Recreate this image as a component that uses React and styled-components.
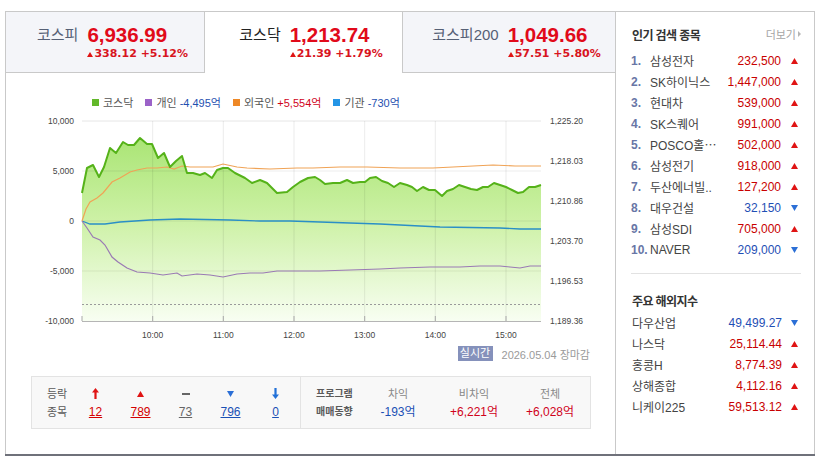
import React from 'react';
import styled, { createGlobalStyle } from 'styled-components';

const GlobalStyle = createGlobalStyle`
  html, body {
    margin: 0;
    padding: 0;
    background: #fff;
  }
  body {
    font-family: "Liberation Sans", "Noto Sans CJK KR", sans-serif;
    color: #333;
  }
`;

const Frame = styled.div`
  display: flex;
  width: 810px;
  height: 443px;
  margin: 11px 0 0 5px;
  border-bottom: 2px solid #6f717a;
`;

const Main = styled.div`
  width: 609px;
  border-left: 1px solid #c9c9c9;
  display: flex;
  flex-direction: column;
`;

const TabRow = styled.div`
  display: flex;
  height: 62px;
`;

const Tab = styled.div`
  box-sizing: border-box;
  width: ${p => p.$w}px;
  height: 62px;
  display: flex;
  align-items: flex-start;
  justify-content: center;
  gap: 9px;
  padding: 12px 0 0 15px;
  border-top: 1px solid #c9c9c9;
  border-bottom: 1px solid ${p => (p.$active ? '#fff' : '#c9c9c9')};
  border-left: ${p => (p.$lineLeft ? '1px solid #c9c9c9' : 'none')};
  border-right: ${p => (p.$lineRight ? '1px solid #c9c9c9' : 'none')};
  background: ${p => (p.$active ? '#fff' : '#f4f5f9')};
`;

const TabLabel = styled.div`
  font-size: 15px;
  line-height: 22px;
  color: ${p => (p.$active ? '#222' : '#566075')};
`;

const TabValues = styled.div`
  display: flex;
  flex-direction: column;
`;

const TabNumber = styled.div`
  font-size: 20.5px;
  line-height: 22px;
  font-weight: 700;
  color: #e10a1a;
`;

const TabChange = styled.div`
  display: flex;
  align-items: center;
  margin-top: 1px;
  font-family: "DejaVu Sans", sans-serif;
  font-size: 11px;
  line-height: 14px;
  font-weight: 700;
  color: #d8141e;
  svg {
    margin-right: 1px;
  }
`;

const Legend = styled.div`
  display: flex;
  align-items: center;
  height: 16px;
  margin: 21px 0 0 86px;
  font-size: 11px;
  color: #555;
`;

const LegendItem = styled.div`
  display: flex;
  align-items: center;
  margin-right: 12px;
`;

const Swatch = styled.span`
  width: 7px;
  height: 7px;
  margin-right: 4px;
  background: ${p => p.$c};
`;

const LegendValue = styled.span`
  margin-left: 3px;
  color: ${p => (p.$up ? '#d0021b' : '#1e4fb0')};
`;

const ChartSvg = styled.svg`
  display: block;
`;

const RealtimeRow = styled.div`
  display: flex;
  justify-content: flex-end;
  align-items: center;
  height: 15px;
  margin-top: 4px;
  padding-right: 25px;
`;

const Badge = styled.span`
  width: 35px;
  height: 15px;
  line-height: 15px;
  text-align: center;
  font-size: 11px;
  color: #fff;
  background: #8591bb;
`;

const DateText = styled.span`
  margin-left: 9px;
  font-size: 11px;
  color: #9a9a9a;
`;

const StatsBox = styled.div`
  display: flex;
  box-sizing: border-box;
  height: 53px;
  margin: 15px 24px 0 25px;
  border: 1px solid #e3e3e3;
  background: #f8f8f8;
`;

const StatsGroup = styled.div`
  box-sizing: border-box;
  display: flex;
  align-items: center;
  width: ${p => p.$w}px;
  padding-left: 14px;
  border-right: ${p => (p.$line ? '1px solid #e3e3e3' : 'none')};
`;

const StatLabel = styled.div`
  width: ${p => p.$w}px;
  font-size: ${p => (p.$bold ? 10 : 11)}px;
  font-weight: ${p => (p.$bold ? 700 : 400)};
  line-height: 18px;
  color: #5a5a5a;
  padding-left: 1px;
`;

const StatCol = styled.div`
  width: ${p => p.$w}px;
  display: flex;
  flex-direction: column;
  align-items: center;
  line-height: 18px;
  font-size: 12px;
`;

const IconCell = styled.div`
  height: 18px;
  display: flex;
  align-items: center;
`;

const CountLink = styled.span`
  color: ${p => p.$c};
  text-decoration: underline;
`;

const ProgHead = styled.span`
  font-size: 11px;
  color: #888;
`;

const ProgValue = styled.span`
  color: ${p => (p.$up ? '#d0021b' : '#1a50b5')};
`;

const Side = styled.div`
  box-sizing: border-box;
  width: 200px;
  border: 1px solid #c9c9c9;
  border-bottom: none;
  padding: 14px 13px 0 15px;
`;

const SideHead = styled.div`
  display: flex;
  justify-content: space-between;
  align-items: center;
  height: 16px;
  margin-top: ${p => p.$mt || 0}px;
`;

const SideTitle = styled.span`
  font-size: 12px;
  font-weight: 700;
  letter-spacing: -0.6px;
  color: #333;
  padding-left: 1px;
`;

const More = styled.span`
  display: flex;
  align-items: center;
  gap: 2px;
  font-size: 11px;
  color: #a5a5a5;
`;

const List = styled.div`
  margin-top: ${p => p.$mt}px;
`;

const Row = styled.div`
  display: flex;
  align-items: center;
  height: 21px;
  font-size: 12px;
`;

const Rank = styled.span`
  width: 19px;
  flex: none;
  font-weight: 700;
  color: #6876a6;
  font-size: 12px;
`;

const Name = styled.span`
  flex: 1;
  color: #444;
  white-space: nowrap;
  overflow: hidden;
  padding-left: ${p => p.$pl || 0}px;
`;

const Value = styled.span`
  color: ${p => (p.$up ? '#c80000' : '#1f4fb5')};
`;

const ArrowBox = styled.span`
  width: 13px;
  margin-left: ${p => p.$ml || 7}px;
  display: flex;
  justify-content: center;
`;

const Divider = styled.div`
  height: 1px;
  background: #e2e2e2;
  margin-top: 13px;
`;

const Tri = ({ up, color, w = 7, h = 6 }) => (
  <svg width={w} height={h} viewBox={`0 0 ${w} ${h}`}>
    <polygon
      points={up ? `${w / 2},0 ${w},${h} 0,${h}` : `0,0 ${w},0 ${w / 2},${h}`}
      fill={color || (up ? '#e01414' : '#2b6fd6')}
    />
  </svg>
);

const BigArrow = ({ up }) => (
  <svg width="7" height="11" viewBox="0 0 7 11">
    <polygon
      points={
        up
          ? '3.5,0 7,4.6 4.6,4.6 4.6,11 2.4,11 2.4,4.6 0,4.6'
          : '3.5,11 7,6.4 4.6,6.4 4.6,0 2.4,0 2.4,6.4 0,6.4'
      }
      fill={up ? '#e01414' : '#2271d8'}
    />
  </svg>
);

const tabs = [
  { label: '코스피', num: '6,936.99', chg: '338.12 +5.12%', w: 199, lineRight: true },
  { label: '코스닥', num: '1,213.74', chg: '21.39 +1.79%', w: 197, active: true },
  { label: '코스피200', num: '1,049.66', chg: '57.51 +5.80%', w: 213, lineLeft: true },
];

const popular = [
  ['1.', '삼성전자', '232,500', true],
  ['2.', 'SK하이닉스', '1,447,000', true],
  ['3.', '현대차', '539,000', true],
  ['4.', 'SK스퀘어', '991,000', true],
  ['5.', 'POSCO홀⋯', '502,000', true],
  ['6.', '삼성전기', '918,000', true],
  ['7.', '두산에너빌..', '127,200', true],
  ['8.', '대우건설', '32,150', false],
  ['9.', '삼성SDI', '705,000', true],
  ['10.', 'NAVER', '209,000', false],
];

const overseas = [
  ['다우산업', '49,499.27', false],
  ['나스닥', '25,114.44', true],
  ['홍콩H', '8,774.39', true],
  ['상해종합', '4,112.16', true],
  ['니케이225', '59,513.12', true],
];

const kosdaq = [
  [82, 193], [87, 168], [93, 165], [99, 177], [104, 167], [110, 148], [116, 153], [123, 142],
  [128, 145], [134, 145], [140, 138], [147, 144], [152, 144], [158, 158], [164, 153], [170, 167],
  [176, 161], [182, 156], [187, 173], [193, 173], [200, 175], [205, 173], [212, 178], [217, 170],
  [223, 168], [228, 168], [235, 173], [245, 178], [252, 183], [260, 180], [267, 183], [277, 193],
  [287, 192], [293, 187], [300, 182], [308, 178], [315, 177], [320, 180], [325, 184], [333, 183],
  [340, 183], [347, 180], [353, 183], [360, 182], [365, 182], [370, 178], [376, 177], [382, 181],
  [388, 183], [394, 187], [400, 183], [407, 185], [412, 187], [417, 191], [423, 187], [429, 190],
  [435, 190], [442, 196], [447, 191], [453, 189], [459, 185], [465, 187], [471, 189], [477, 190],
  [483, 187], [488, 187], [494, 183], [500, 185], [506, 187], [512, 190], [518, 193], [523, 192],
  [529, 187], [535, 187], [541, 185],
];

const foreign = [
  [82, 221], [86, 209], [90, 202], [97, 198], [103, 193], [112, 182], [120, 178], [130, 172],
  [137, 170], [147, 168], [157, 168], [167, 167], [174, 169], [182, 166], [190, 167], [213, 167],
  [223, 164], [237, 167], [247, 168], [270, 169], [297, 168], [313, 168], [340, 167], [367, 167],
  [400, 168], [433, 168], [453, 167], [493, 165], [515, 166], [541, 166],
];

const retail = [
  [82, 221], [87, 228], [93, 237], [100, 240], [105, 245], [112, 257], [118, 262], [127, 268],
  [137, 272], [150, 273], [163, 275], [177, 273], [182, 276], [197, 274], [210, 275], [223, 277],
  [237, 274], [250, 273], [263, 273], [277, 271], [297, 271], [320, 271], [350, 270], [380, 269],
  [400, 268], [430, 267], [460, 267], [480, 266], [500, 266], [510, 267], [520, 268], [530, 266],
  [541, 266],
];

const inst = [
  [82, 221], [90, 224], [105, 224], [120, 222], [150, 220], [180, 219], [230, 220], [260, 221],
  [290, 221], [320, 222], [380, 224], [440, 227], [500, 228], [520, 229], [541, 229],
];

const toPath = pts => pts.map((p, i) => `${i ? 'L' : 'M'}${p[0]} ${p[1]}`).join(' ');

const times = [
  [152.7, '10:00'], [223.3, '11:00'], [294, '12:00'], [364.7, '13:00'], [435.3, '14:00'], [506, '15:00'],
];
const leftAxis = [[121, '10,000'], [171, '5,000'], [221, '0'], [271, '-5,000'], [321, '-10,000']];
const rightAxis = [
  [121, '1,225.20'], [161, '1,218.03'], [201, '1,210.86'], [241, '1,203.70'], [281, '1,196.53'], [321, '1,189.36'],
];

const Chart = () => (
  <ChartSvg width="609" height="232" viewBox="6 110 609 232">
    <defs>
      <linearGradient id="kqFill" x1="0" y1="0" x2="0" y2="1">
        <stop offset="0" stopColor="#aae575" />
        <stop offset="0.45" stopColor="#cdf1a6" />
        <stop offset="1" stopColor="#f8fef2" />
      </linearGradient>
    </defs>
    <line x1="82" y1="121" x2="541" y2="121" stroke="#e6e6e6" />
    <path d={`${toPath(kosdaq)} L541 321 L82 321 Z`} fill="url(#kqFill)" />
    {[171, 221, 271].map(y => (
      <line key={y} x1="82" y1={y} x2="541" y2={y} stroke="#000" strokeOpacity="0.07" />
    ))}
    {times.map(([x]) => (
      <line key={x} x1={x} y1="121" x2={x} y2="321" stroke="#000" strokeOpacity="0.08" />
    ))}
    <line x1="82" y1="304.5" x2="541" y2="304.5" stroke="#9a9a9a" strokeDasharray="2 2" />
    <line x1="82" y1="321.5" x2="541" y2="321.5" stroke="#b5b5b5" />
    {[[82], ...times].map(([x]) => (
      <line key={`t${x}`} x1={x} y1="316" x2={x} y2="321" stroke="#a8a8a8" />
    ))}
    <path d={toPath(inst)} fill="none" stroke="#2a8fc6" strokeWidth="1.3" />
    <path d={toPath(retail)} fill="none" stroke="#9a7ab4" strokeWidth="1.2" />
    <path d={toPath(foreign)} fill="none" stroke="#f0a356" strokeWidth="1.2" />
    <path d={toPath(kosdaq)} fill="none" stroke="#55b219" strokeWidth="2" strokeLinejoin="round" />
    <g fontFamily="Liberation Sans, sans-serif" fontSize="8.5" fill="#444">
      {leftAxis.map(([y, t]) => (
        <text key={t} x="74" y={y + 3} textAnchor="end">{t}</text>
      ))}
      {rightAxis.map(([y, t]) => (
        <text key={t} x="550" y={y + 3}>{t}</text>
      ))}
      {times.map(([x, t]) => (
        <text key={t} x={x} y="338" textAnchor="middle">{t}</text>
      ))}
    </g>
  </ChartSvg>
);

const App = () => (
  <>
    <GlobalStyle />
    <Frame>
      <Main>
        <TabRow>
          {tabs.map(t => (
            <Tab key={t.label} $w={t.w} $active={t.active} $lineLeft={t.lineLeft} $lineRight={t.lineRight}>
              <TabLabel $active={t.active}>{t.label}</TabLabel>
              <TabValues>
                <TabNumber>{t.num}</TabNumber>
                <TabChange>
                  <Tri up w={6} h={5} color="#e01414" />
                  {t.chg}
                </TabChange>
              </TabValues>
            </Tab>
          ))}
        </TabRow>

        <Legend>
          <LegendItem>
            <Swatch $c="#62b82a" />코스닥
          </LegendItem>
          <LegendItem>
            <Swatch $c="#9b62c8" />개인<LegendValue>-4,495억</LegendValue>
          </LegendItem>
          <LegendItem>
            <Swatch $c="#ee8826" />외국인<LegendValue $up>+5,554억</LegendValue>
          </LegendItem>
          <LegendItem>
            <Swatch $c="#2495e6" />기관<LegendValue>-730억</LegendValue>
          </LegendItem>
        </Legend>

        <Chart />

        <RealtimeRow>
          <Badge>실시간</Badge>
          <DateText>2026.05.04 장마감</DateText>
        </RealtimeRow>

        <StatsBox>
          <StatsGroup $w={269} $line>
            <StatLabel $w={26}>
              등락<br />종목
            </StatLabel>
            <StatCol $w={45}>
              <IconCell><BigArrow up /></IconCell>
              <CountLink $c="#d40000">12</CountLink>
            </StatCol>
            <StatCol $w={45}>
              <IconCell><Tri up /></IconCell>
              <CountLink $c="#d40000">789</CountLink>
            </StatCol>
            <StatCol $w={45}>
              <IconCell><svg width="8" height="2"><rect width="8" height="2" fill="#666" /></svg></IconCell>
              <CountLink $c="#666">73</CountLink>
            </StatCol>
            <StatCol $w={45}>
              <IconCell><Tri /></IconCell>
              <CountLink $c="#1a50b5">796</CountLink>
            </StatCol>
            <StatCol $w={45}>
              <IconCell><BigArrow /></IconCell>
              <CountLink $c="#1a50b5">0</CountLink>
            </StatCol>
          </StatsGroup>
          <StatsGroup $w={288}>
            <StatLabel $w={44} $bold>
              프로그램<br />매매동향
            </StatLabel>
            <StatCol $w={76}>
              <ProgHead>차익</ProgHead>
              <ProgValue>-193억</ProgValue>
            </StatCol>
            <StatCol $w={76}>
              <ProgHead>비차익</ProgHead>
              <ProgValue $up>+6,221억</ProgValue>
            </StatCol>
            <StatCol $w={76}>
              <ProgHead>전체</ProgHead>
              <ProgValue $up>+6,028억</ProgValue>
            </StatCol>
          </StatsGroup>
        </StatsBox>
      </Main>

      <Side>
        <SideHead>
          <SideTitle>인기 검색 종목</SideTitle>
          <More>
            더보기
            <svg width="3" height="6" viewBox="0 0 3 6"><polygon points="0,0 3,3 0,6" fill="#b5b5b5" /></svg>
          </More>
        </SideHead>
        <List $mt={8}>
          {popular.map(([r, n, v, up]) => (
            <Row key={r}>
              <Rank>{r}</Rank>
              <Name>{n}</Name>
              <Value $up={up}>{v}</Value>
              <ArrowBox><Tri up={up} /></ArrowBox>
            </Row>
          ))}
        </List>
        <Divider />
        <SideHead $mt={18}>
          <SideTitle>주요 해외지수</SideTitle>
        </SideHead>
        <List $mt={4}>
          {overseas.map(([n, v, up]) => (
            <Row key={n}>
              <Name $pl={1}>{n}</Name>
              <Value $up={up}>{v}</Value>
              <ArrowBox $ml={6}><Tri up={up} /></ArrowBox>
            </Row>
          ))}
        </List>
      </Side>
    </Frame>
  </>
);

export default App;
